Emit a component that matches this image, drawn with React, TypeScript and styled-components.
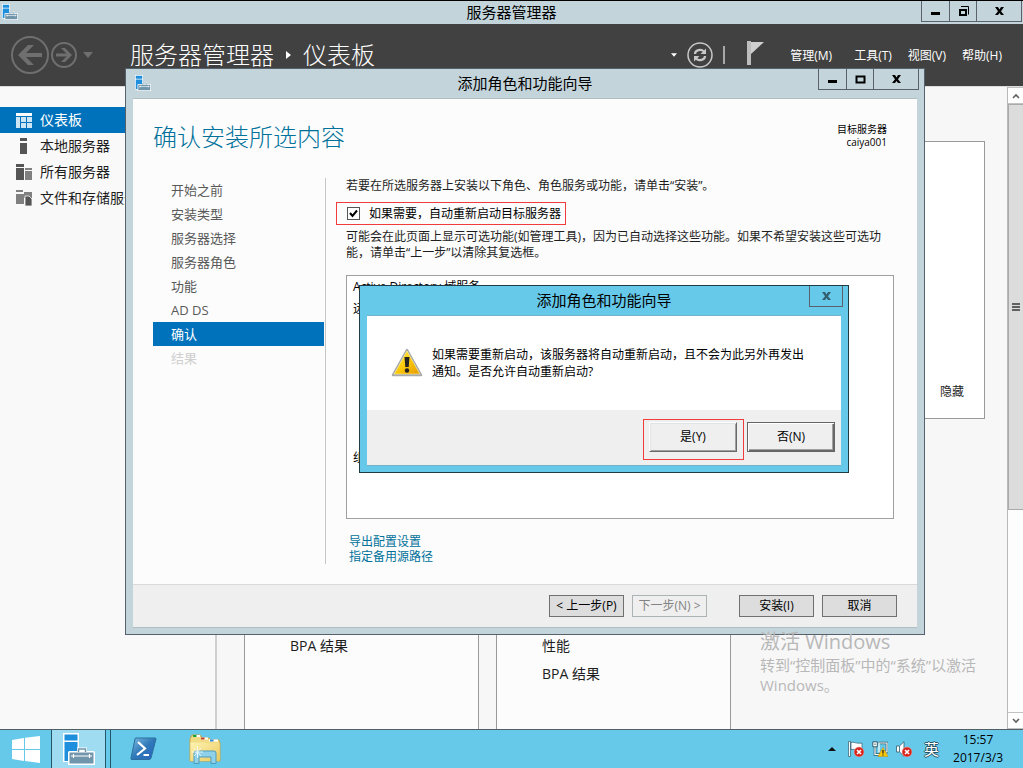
import React from "react";
import styled, { createGlobalStyle, css } from "styled-components";

const GlobalStyle = createGlobalStyle`
  * { box-sizing: border-box; }
  html, body, #root { height: 100%; }
  body {
    margin: 0;
    overflow: hidden;
    color: #1e1e1e;
    font: 12px/16px "Open Sans", "Noto Sans CJK SC", sans-serif;
  }
  button, input { font: inherit; color: inherit; margin: 0; padding: 0; }
  h1, h2, p, ul, nav { margin: 0; padding: 0; font-weight: 400; }
  ul { list-style: none; }
  a { color: inherit; text-decoration: none; }
  svg { display: block; flex: none; }
`;

const Desktop = styled.div`
  position: relative;
  display: flex;
  flex-direction: column;
  height: 100vh;
  overflow: hidden;
`;

/* ---------- window title bars ---------- */

const TitleBar = styled.header<{ $tall?: boolean }>`
  display: grid;
  grid-template-columns: 1fr auto 1fr;
  align-items: start;
  height: ${(p) => (p.$tall ? 29 : 23)}px;
`;

const TitleText = styled.h2<{ $tall?: boolean }>`
  grid-column: 2;
  font-size: 15px;
  line-height: ${(p) => (p.$tall ? 28 : 22)}px;
  color: #000;
`;

const TitleIcon = styled.span<{ $tall?: boolean }>`
  padding: ${(p) => (p.$tall ? "6px 0 0 9px" : "3px 0 0 2px")};
`;

const Controls = styled.div<{ $framed?: boolean }>`
  display: flex;
  grid-column: 3;
  justify-self: end;
  margin-right: ${(p) => (p.$framed ? 5 : 1)}px;
  border: 1px solid #5a606c;
  border-top: 0;
`;

const Control = styled.button<{ $width?: number; $muted?: boolean }>`
  display: flex;
  align-items: center;
  justify-content: center;
  width: ${(p) => p.$width ?? 27}px;
  height: 20px;
  border: 0;
  background: none;
  color: ${(p) => (p.$muted ? "#33606f" : "#000")};
  & + & { border-left: 1px solid #5a606c; }
`;

/* ---------- main window ---------- */

const MainWindow = styled.main`
  display: flex;
  flex: 1;
  flex-direction: column;
  min-height: 0;
  background: #c3d5db;
  border-top: 1px solid #000;
`;

const Banner = styled.div`
  display: flex;
  align-items: center;
  flex: none;
  height: 62px;
  padding: 0 21px 0 10px;
  background: #414141;
  color: #fff;
`;

const NavButtons = styled.div`
  display: flex;
  align-items: center;
  gap: 1px;
  width: 120px;
`;

const GlyphButton = styled.button`
  display: flex;
  border: 0;
  background: none;
`;

const HistoryButton = styled(GlyphButton)`
  margin-left: 5px;
`;

const Breadcrumb = styled.h1`
  display: flex;
  align-items: center;
  gap: 12px;
  flex: 1;
  font-size: 24px;
  font-weight: 300;
  line-height: 32px;
`;

const Tools = styled.div`
  display: flex;
  align-items: center;
  gap: 10px;
  margin-right: 25px;
`;

const FlagButton = styled(GlyphButton)`
  margin: 0 0 4px 12px;
`;

const Menu = styled.nav`
  display: flex;
  gap: 16px;
  padding-top: 2px;
`;

const MenuItem = styled.button`
  border: 0;
  background: none;
  white-space: nowrap;
  &:first-child { margin-right: 6px; }
`;

const Body = styled.div`
  display: flex;
  flex: 1;
  min-height: 0;
  border-top: 1px solid #dcdcdc;
  background: #f7f7f7;
`;

const Sidebar = styled.nav`
  flex: none;
  width: 217px;
  padding-top: 20px;
  border-right: 2px solid #cfcfcf;
  background: #f9f9f9;
`;

const SideLink = styled.a<{ $active?: boolean }>`
  display: flex;
  align-items: center;
  gap: 8px;
  height: 26px;
  padding-left: 16px;
  font-size: 14px;
  line-height: 20px;
  white-space: nowrap;
  ${(p) => p.$active && css`background: #0072bc; color: #fff;`}
`;

const Dashboard = styled.section`
  flex: 1;
  min-width: 0;
  padding: 54px 22px 0 27px;
  overflow: hidden;
`;

const WelcomeTile = styled.div`
  display: flex;
  align-items: flex-end;
  justify-content: flex-end;
  height: 278px;
  padding: 18px 20px;
  border: 1px solid #999;
  background: #fff;
`;

const HideLink = styled.button`
  border: 0;
  background: none;
`;

const RoleTiles = styled.div`
  display: flex;
  gap: 17px;
  height: 400px;
  margin-top: 20px;
`;

const RoleTile = styled.ul`
  width: 235px;
  padding: 192px 45px 0;
  border: 1px solid #999;
  background: #fcfcfc;
  font-size: 14px;
  line-height: 28px;
`;

const ScrollBar = styled.div`
  display: flex;
  flex-direction: column;
  flex: none;
  width: 16px;
  border-left: 1px solid #b9b9b9;
  background: #fdfdfd;
`;

const ScrollButton = styled.button`
  display: flex;
  align-items: center;
  justify-content: center;
  height: 17px;
  border: 1px solid #c2c2c2;
  border-width: 1px 0;
  background: #fff;
`;

const Thumb = styled.div`
  display: flex;
  align-items: center;
  justify-content: center;
  flex: 0 1 406px;
  border: 1px solid #aaa;
  border-right: 0;
  background: #dcdcdc;
`;

const Track = styled.div`
  flex: 1 0 0;
`;

/* ---------- wizard ---------- */

const Wizard = styled.section`
  position: absolute;
  top: 68px;
  left: 125px;
  right: 98px;
  padding-bottom: 6px;
  border: 1px solid #55616d;
  background: #c3d5db;
`;

const WizardPage = styled.div`
  margin: 0 7px;
  border: 1px solid #b0bdc2;
  border-width: 1px 0;
  background: #fcfcfc;
`;

const WizardHead = styled.div`
  display: flex;
  justify-content: space-between;
  height: 79px;
  padding: 20px 30px 0 20px;
`;

const WizardTitle = styled.h1`
  color: #00719a;
  font-size: 24px;
  font-weight: 300;
  line-height: 36px;
`;

const Target = styled.p`
  padding-top: 4px;
  color: #000;
  font-size: 10px;
  line-height: 13px;
  text-align: right;
`;

const WizardMain = styled.div`
  display: flex;
  padding: 0 23px 20px 20px;
`;

const Steps = styled.nav`
  flex: none;
  width: 173px;
  border-right: 1px solid #c6c6c6;
  padding-right: 1px;
`;

const Step = styled.a<{ $state?: "current" | "disabled" }>`
  display: block;
  padding-left: 18px;
  color: #595959;
  font-size: 13px;
  line-height: 24px;
  ${(p) => p.$state === "current" && css`background: #0072bc; color: #fff;`}
  ${(p) => p.$state === "disabled" && css`color: #cfcfcf;`}
`;

const StepContent = styled.div`
  display: flex;
  flex: 1;
  flex-direction: column;
  align-items: flex-start;
  min-width: 0;
  padding-left: 10px;
`;

const Copy = styled.p`
  padding: 0 10px;
`;

const RestartOption = styled.label`
  display: flex;
  align-items: center;
  gap: 9px;
  height: 23px;
  margin: 8px 0 4px;
  padding: 0 4px 0 10px;
  border: 1px solid #f03c3c;
  color: #000;
`;

const Checkbox = styled.input`
  appearance: none;
  width: 13px;
  height: 13px;
  border: 1px solid #555;
  background: #fff;
  &:checked {
    background: #fff url("data:image/svg+xml,%3Csvg xmlns='http://www.w3.org/2000/svg' viewBox='0 0 11 11'%3E%3Cpath d='M2 5l2.500 3L9 2.500' fill='none' stroke='%23000' stroke-width='2'/%3E%3C/svg%3E");
  }
`;

const Summary = styled.div`
  align-self: stretch;
  height: 244px;
  margin: 14px 0 15px 10px;
  padding: 0 6px;
  border: 1px solid #a0a0a0;
  background: #fff;
  color: #000;
  line-height: 22px;
`;

const SummaryGroup = styled.div<{ $last?: boolean }>`
  height: ${(p) => (p.$last ? 22 : 171)}px;
`;

const ActionLink = styled.a`
  padding-left: 13px;
  color: #00719a;
  line-height: 15px;
`;

const WizardFooter = styled.footer`
  display: flex;
  justify-content: flex-end;
  gap: 8px;
  padding: 10px 20px;
  border-top: 1px solid #d9d9d9;
  background: #efefef;
`;

const FlatButton = styled.button<{ $apart?: boolean }>`
  width: 75px;
  height: 22px;
  margin-left: ${(p) => (p.$apart ? 24 : 0)}px;
  border: 1px solid #707070;
  background: #dddddd;
  color: #000;
  line-height: 20px;
  white-space: nowrap;
  &:disabled { border-color: #adb2b5; background: #efefef; color: #838383; }
`;

/* ---------- confirmation dialog ---------- */

const Dialog = styled.section`
  position: absolute;
  top: 285px;
  left: 359px;
  width: 490px;
  padding-bottom: 6px;
  border: 1px solid #1f3b47;
  background: #66c9ea;
`;

const DialogPage = styled.div`
  margin: 0 7px;
  border: 1px solid #74b2c9;
  border-width: 1px 0;
`;

const Message = styled.div`
  display: flex;
  gap: 9px;
  height: 94px;
  padding: 30px 34px 0 24px;
  background: #fff;
  color: #000;
  line-height: 17px;
`;

const DialogActions = styled.div`
  display: flex;
  justify-content: flex-end;
  align-items: flex-start;
  gap: 3px;
  padding: 9px 6px 5px;
  background: #efefef;
`;

const Marked = styled.div`
  padding: 2px 6px 7px 5px;
  border: 1px solid #f03c3c;
`;

const RaisedButton = styled.button<{ $default?: boolean }>`
  display: block;
  width: 88px;
  height: 30px;
  border: 1px solid;
  border-color: #fff #696969 #696969 #fff;
  background: #efefef;
  box-shadow: inset 1px 1px #e3e3e3, inset -1px -1px #a0a0a0;
  color: #000;
  ${(p) =>
    p.$default &&
    css`
      margin-top: 3px;
      border-color: #646464;
      box-shadow: inset 1px 1px #fff, inset -1px -1px #696969, inset -2px -2px #a0a0a0;
    `}
`;

/* ---------- watermark and taskbar ---------- */

const Watermark = styled.aside`
  position: absolute;
  right: 34px;
  bottom: 73px;
  width: 229px;
  color: #b8b8b8;
  font-size: 15px;
  line-height: 20px;
  pointer-events: none;
  white-space: nowrap;
`;

const WatermarkTitle = styled.p`
  font-size: 20px;
  line-height: 26px;
`;

const Taskbar = styled.footer`
  display: flex;
  align-items: stretch;
  flex: none;
  height: 39px;
  border-top: 1px solid #4f5f66;
  background: #66c9ea;
  color: #000;
`;

const TaskButton = styled.button<{ $active?: boolean; $width: number }>`
  display: flex;
  align-items: center;
  justify-content: center;
  width: ${(p) => p.$width}px;
  border: 0;
  background: none;
  ${(p) =>
    p.$active &&
    css`
      background: #9fdcf2;
      border: 1px solid #24566a;
      border-width: 0 1px;
      box-shadow: 4px 0 #66c9ea, 5px 0 #24566a;
    `}
`;

const Tray = styled.div`
  display: flex;
  align-items: center;
  gap: 8px;
  margin-left: auto;
  padding-right: 20px;
`;

const TrayButton = styled.button`
  display: flex;
  border: 0;
  background: none;
  &:first-child { margin-right: 4px; }
`;

const InputMode = styled.button`
  margin-left: 4px;
  border: 0;
  background: none;
  color: #fff;
  font-size: 15px;
  line-height: 20px;
  text-shadow: 1px 0 #2b5564, -1px 0 #2b5564, 0 1px #2b5564, 0 -1px #2b5564;
`;

const Clock = styled.time`
  margin-left: 6px;
  font-size: 12px;
  line-height: 18px;
  text-align: center;
`;

/* ---------- drawings ---------- */

const ServerIcon = ({ size = 16 }: { size?: number }) => (
  <svg width={size} height={size} viewBox="0 0 32 32">
    <path d="M0 0h16v29H0z" fill="#fff" />
    <path d="M1.500 1.500h13v6h-13zM1.500 9h13v19h-13z" fill="#1e8fdd" />
    <path d="M14 18v-3.500h10V18h6.500q1.500 0 1.500 1.500V32H5V19.500Q5 18 6.500 18z" fill="#fff" />
    <path d="M6.500 19.500h24v11h-24z" fill="#7195ab" />
    <path d="M15.500 19v-3h7v3" fill="none" stroke="#7195ab" strokeWidth="1.500" />
    <path d="M8 23h21M10.500 21v4M26.500 21v4" stroke="#fff" strokeWidth="1.200" />
  </svg>
);

const MinimizeGlyph = () => (
  <svg width="11" height="11" viewBox="0 0 11 11"><path d="M1 6h9v3H1z" fill="currentColor" /></svg>
);

const MaximizeGlyph = () => (
  <svg width="11" height="11" viewBox="0 0 11 11"><path d="M1.500 2.500h8v6h-8z" fill="none" stroke="currentColor" strokeWidth="2" /></svg>
);

const RestoreGlyph = () => (
  <svg width="11" height="11" viewBox="0 0 11 11" fill="none" stroke="currentColor">
    <path d="M3 .5h7.500v8" />
    <path d="M2 4h6v5H2z" strokeWidth="2" />
  </svg>
);

const CloseGlyph = () => (
  <svg width="11" height="11" viewBox="0 0 11 11">
    <path d="M1 1h3l1.500 2.500L7 1h3L7 5.200 10 9H7L5.500 6.900 4 9H1l3-3.800z" fill="currentColor" />
  </svg>
);

const BackIcon = () => (
  <svg width="40" height="40" viewBox="0 0 40 40" fill="none" stroke="#6f6f6f">
    <circle cx="20" cy="20" r="18" strokeWidth="2" />
    <path d="M32 20H11" strokeWidth="4" />
    <path d="M8 20l10-10h6L14 20l10 10h-6z" fill="#6f6f6f" stroke="none" />
  </svg>
);

const ForwardIcon = () => (
  <svg width="26" height="26" viewBox="0 0 26 26" fill="none" stroke="#6f6f6f">
    <circle cx="13" cy="13" r="12" strokeWidth="2" />
    <path d="M5 13h14" strokeWidth="3" />
    <path d="M21 13l-7-7h-4l7 7-7 7h4z" fill="#6f6f6f" stroke="none" />
  </svg>
);

const Caret = ({ width = 6, color = "#fff" }: { width?: number; color?: string }) => (
  <svg width={width} height={width / 2 + 1} viewBox="0 0 10 6"><path d="M0 0h10L5 6z" fill={color} /></svg>
);

const RefreshIcon = () => (
  <svg width="26" height="26" viewBox="0 0 26 26" fill="none" stroke="#c8c8c8">
    <circle cx="13" cy="13" r="12" strokeWidth="1.500" />
    <path d="M8 12c0-4 6-5.500 9-2.500M18 14c0 4-6 5.500-9 2.500" strokeWidth="2.200" />
    <path d="M19 6.500v5.500h-5.500zM7 19.500V14h5.500z" fill="#c8c8c8" stroke="none" />
  </svg>
);

const FlagIcon = () => (
  <svg width="18" height="24" viewBox="0 0 18 24">
    <path d="M0 0h4v24H0z" fill="#bdbdbd" />
    <path d="M4 1h13L4 13z" fill="#d0d0d0" />
  </svg>
);

const DashboardIcon = () => (
  <svg width="16" height="16" viewBox="0 0 16 16">
    <path d="M0 1h16v3H0z" fill="#fff" />
    <path d="M0 5h4v11H0zM5 5h5v5H5zM11 5h5v5h-5zM5 11h5v5H5zM11 11h5v5h-5z" fill="#cde5f5" />
  </svg>
);

const LocalServerIcon = () => (
  <svg width="16" height="16" viewBox="0 0 16 16"><path d="M4 0h7v3H4zM4 5h7v11H4z" fill="#555" /></svg>
);

const AllServersIcon = () => (
  <svg width="16" height="16" viewBox="0 0 16 16">
    <path d="M0 0h8v3H0zM0 4h8v12H0z" fill="#555" />
    <path d="M9 4h7v2H9zM9 7h7v9H9z" fill="#808080" />
  </svg>
);

const StorageIcon = () => (
  <svg width="16" height="16" viewBox="0 0 16 16">
    <path d="M0 0h7v2H0zM0 4h8v10H0zM8 2h8v6H8z" fill="#808080" />
    <path d="M9 6h4l3 3v7H9z" fill="#555" stroke="#f9f9f9" strokeWidth=".8" />
  </svg>
);

const ChevronIcon = ({ down }: { down?: boolean }) => (
  <svg width="8" height="6" viewBox="0 0 8 6">
    <path d={down ? "M1 1l3 3 3-3" : "M1 5l3-3 3 3"} fill="none" stroke="#606060" strokeWidth="1.600" />
  </svg>
);

const GripIcon = () => (
  <svg width="8" height="8" viewBox="0 0 8 8"><path d="M0 0h8v2H0zM0 3h8v2H0zM0 6h8v2H0z" fill="#606060" /></svg>
);

const WarningIcon = () => (
  <svg width="32" height="32" viewBox="0 0 32 32">
    <defs>
      <linearGradient id="amber" x1="0" y1="0" x2="1" y2="1">
        <stop offset="0" stopColor="#fff04a" />
        <stop offset=".5" stopColor="#fbc90b" />
        <stop offset="1" stopColor="#e69a00" />
      </linearGradient>
    </defs>
    <path d="M16 4L30 29H2z" fill="#aaa" stroke="#aaa" strokeWidth="2.500" strokeLinejoin="round" />
    <path d="M16 5L28.800 28H3.200z" fill="url(#amber)" stroke="#fff3a0" strokeWidth=".6" />
    <path d="M13.500 11h5l-.8 10h-3.400z" fill="#222" />
    <circle cx="16" cy="24.500" r="2.200" fill="#222" />
  </svg>
);

const StartIcon = () => (
  <svg width="28" height="27" viewBox="0 0 28 27" fill="#fff">
    <path d="M0 4l12-2v11H0zM13 1.800L28 0v13H13zM0 14h12v11L0 23zM13 14h15v13l-15-2z" />
  </svg>
);

const PowerShellIcon = () => (
  <svg width="28" height="24" viewBox="0 0 28 24">
    <defs>
      <linearGradient id="shell" x1="0" y1="0" x2="1" y2="1">
        <stop offset="0" stopColor="#7fbde3" />
        <stop offset=".5" stopColor="#2f78b8" />
        <stop offset="1" stopColor="#2a62c0" />
      </linearGradient>
    </defs>
    <path d="M7 1h19q1 0 1 1l-5 19q-.5 1.500-2 1.500H3q-1.500 0-1-1.500L6 2q0-1 1-1z" fill="url(#shell)" stroke="#2a6f9e" />
    <path d="M9 5l7 6.500-8 6.500M14.500 18h5.500" fill="none" stroke="#fff" strokeWidth="2.200" />
  </svg>
);

const FolderIcon = () => (
  <svg width="32" height="30" viewBox="0 0 32 30">
    <defs>
      <linearGradient id="folder" x1="0" y1="0" x2="1" y2="1">
        <stop offset="0" stopColor="#fdf3b4" />
        <stop offset="1" stopColor="#ecc95c" />
      </linearGradient>
    </defs>
    <path d="M1 27V5l2-4h8l2 3h7l2 2h8l1 3v18z" fill="#f2dc84" stroke="#c9a646" />
    <path d="M4 1h7v2H4zM12 3.500h7v2h-7zM20 5.500h9v2h-9z" fill="#fff" />
    <path d="M4 1h3.500v2H4z" fill="#18a33a" />
    <path d="M12 3.500h3.500v2H12z" fill="#c8402c" />
    <path d="M21 5.500h3.500v2H21z" fill="#2c8ae0" />
    <path d="M1.500 8.500h14l2 1h13V27h-29z" fill="url(#folder)" />
    <path d="M5 29.500V19q0-2 2-2h18q2 0 2 2v10.500h-5V23H10v6.500z" fill="#8fd0ea" stroke="#4a9dbf" />
    <path d="M8.500 12v12M3 18h11M5 14l7 8M12 14l-7 8" stroke="#fff" strokeWidth=".9" opacity=".85" />
  </svg>
);

const ErrorBadge = () => (
  <>
    <circle cx="11" cy="11" r="5" fill="#d9261c" stroke="#f5b5b0" strokeWidth=".5" />
    <path d="M9 9l4 4M13 9l-4 4" stroke="#fff" strokeWidth="1.600" />
  </>
);

const ActionCenterIcon = () => (
  <svg width="16" height="16" viewBox="0 0 16 16">
    <path d="M.5.500h2v15h-2z" fill="#fff" stroke="#2f5c6b" strokeWidth=".7" />
    <path d="M3 1.500c3-1 5 1.500 11 .5v7c-5 1-7-1.500-11-.5z" fill="#fff" stroke="#2f5c6b" strokeWidth=".7" />
    <ErrorBadge />
  </svg>
);

const NetworkIcon = () => (
  <svg width="16" height="16" viewBox="0 0 16 16">
    <path d="M6.500 2h8.500v9H7M3 6v7.500h5" fill="none" stroke="#2f5c6b" strokeWidth="2.600" />
    <path d="M6.500 2h8.500v9H7V2M3 6v7.500h5" fill="none" stroke="#fff" strokeWidth="1.200" />
    <path d="M.8.800h4.500v5H.8z" fill="#fff" stroke="#2f5c6b" />
    <path d="M2.500 2.500h1v1.500h-1z" fill="#2f5c6b" />
    <path d="M11 6.500l5 9H6z" fill="#fbc90b" stroke="#c98d00" strokeWidth=".5" />
    <path d="M11 9v3.500M11 13.500v1" stroke="#222" strokeWidth="1.300" />
  </svg>
);

const VolumeIcon = () => (
  <svg width="16" height="16" viewBox="0 0 16 16">
    <path d="M.5 5h3L8 .7v14.600L3.500 11h-3z" fill="#fff" stroke="#2f5c6b" strokeWidth=".8" />
    <path d="M3.500 5v6" stroke="#2f5c6b" strokeWidth=".8" />
    <ErrorBadge />
  </svg>
);

/* ---------- page ---------- */

const sideItems = [
  { label: "仪表板", Icon: DashboardIcon, active: true },
  { label: "本地服务器", Icon: LocalServerIcon },
  { label: "所有服务器", Icon: AllServersIcon },
  { label: "文件和存储服务", Icon: StorageIcon },
];

const steps: { label: string; state?: "current" | "disabled" }[] = [
  { label: "开始之前" },
  { label: "安装类型" },
  { label: "服务器选择" },
  { label: "服务器角色" },
  { label: "功能" },
  { label: "AD DS" },
  { label: "确认", state: "current" },
  { label: "结果", state: "disabled" },
];

const WindowControls = ({ restored }: { restored?: boolean }) => (
  <Controls $framed={!restored}>
    <Control aria-label="最小化"><MinimizeGlyph /></Control>
    <Control aria-label="最大化">{restored ? <RestoreGlyph /> : <MaximizeGlyph />}</Control>
    <Control aria-label="关闭" $width={45}><CloseGlyph /></Control>
  </Controls>
);

const ServerManager = () => (
  <MainWindow>
    <TitleBar>
      <TitleIcon><ServerIcon /></TitleIcon>
      <TitleText>服务器管理器</TitleText>
      <WindowControls restored />
    </TitleBar>
    <Banner>
      <NavButtons>
        <GlyphButton aria-label="后退"><BackIcon /></GlyphButton>
        <GlyphButton aria-label="前进"><ForwardIcon /></GlyphButton>
        <HistoryButton aria-label="历史记录"><Caret width={10} color="#6f6f6f" /></HistoryButton>
      </NavButtons>
      <Breadcrumb>
        服务器管理器
        <svg width="5" height="8" viewBox="0 0 5 8"><path d="M0 0l5 4-5 4z" fill="#fff" /></svg>
        仪表板
      </Breadcrumb>
      <Tools>
        <GlyphButton aria-label="选项"><Caret /></GlyphButton>
        <GlyphButton aria-label="刷新"><RefreshIcon /></GlyphButton>
        <svg width="2" height="18"><path d="M0 0h2v18H0z" fill="#a8a8a8" /></svg>
        <FlagButton aria-label="通知"><FlagIcon /></FlagButton>
      </Tools>
      <Menu>
        {["管理(M)", "工具(T)", "视图(V)", "帮助(H)"].map((label) => (
          <MenuItem key={label}>{label}</MenuItem>
        ))}
      </Menu>
    </Banner>
    <Body>
      <Sidebar>
        {sideItems.map(({ label, Icon, active }) => (
          <SideLink key={label} href="#" $active={active}><Icon />{label}</SideLink>
        ))}
      </Sidebar>
      <Dashboard>
        <WelcomeTile><HideLink>隐藏</HideLink></WelcomeTile>
        <RoleTiles>
          <RoleTile><li>BPA 结果</li></RoleTile>
          <RoleTile><li>性能</li><li>BPA 结果</li></RoleTile>
        </RoleTiles>
      </Dashboard>
      <ScrollBar>
        <ScrollButton aria-label="向上滚动"><ChevronIcon /></ScrollButton>
        <Thumb><GripIcon /></Thumb>
        <Track />
        <ScrollButton aria-label="向下滚动"><ChevronIcon down /></ScrollButton>
      </ScrollBar>
    </Body>
  </MainWindow>
);

const RoleWizard = () => (
  <Wizard>
    <TitleBar $tall>
      <TitleIcon $tall><ServerIcon /></TitleIcon>
      <TitleText $tall>添加角色和功能向导</TitleText>
      <WindowControls />
    </TitleBar>
    <WizardPage>
      <WizardHead>
        <WizardTitle>确认安装所选内容</WizardTitle>
        <Target>目标服务器<br />caiya001</Target>
      </WizardHead>
      <WizardMain>
        <Steps>
          {steps.map(({ label, state }) => (
            <Step key={label} href="#" $state={state}>{label}</Step>
          ))}
        </Steps>
        <StepContent>
          <Copy>若要在所选服务器上安装以下角色、角色服务或功能，请单击“安装”。</Copy>
          <RestartOption>
            <Checkbox type="checkbox" defaultChecked />
            如果需要，自动重新启动目标服务器
          </RestartOption>
          <Copy>可能会在此页面上显示可选功能(如管理工具)，因为已自动选择这些功能。如果不希望安装这些可选功能，请单击“上一步”以清除其复选框。</Copy>
          <Summary>
            <SummaryGroup>Active Directory 域服务<br />远程服务器管理工具</SummaryGroup>
            <SummaryGroup $last>组策略管理</SummaryGroup>
          </Summary>
          <ActionLink href="#">导出配置设置</ActionLink>
          <ActionLink href="#">指定备用源路径</ActionLink>
        </StepContent>
      </WizardMain>
      <WizardFooter>
        <FlatButton>&lt; 上一步(P)</FlatButton>
        <FlatButton disabled>下一步(N) &gt;</FlatButton>
        <FlatButton $apart>安装(I)</FlatButton>
        <FlatButton>取消</FlatButton>
      </WizardFooter>
    </WizardPage>
  </Wizard>
);

const RestartDialog = () => (
  <Dialog role="dialog" aria-label="添加角色和功能向导">
    <TitleBar $tall>
      <TitleText $tall>添加角色和功能向导</TitleText>
      <Controls $framed><Control aria-label="关闭" $muted $width={32}><CloseGlyph /></Control></Controls>
    </TitleBar>
    <DialogPage>
      <Message>
        <WarningIcon />
        <p>如果需要重新启动，该服务器将自动重新启动，且不会为此另外再发出通知。是否允许自动重新启动?</p>
      </Message>
      <DialogActions>
        <Marked><RaisedButton>是(Y)</RaisedButton></Marked>
        <RaisedButton $default>否(N)</RaisedButton>
      </DialogActions>
    </DialogPage>
  </Dialog>
);

export default function App() {
  return (
    <Desktop>
      <GlobalStyle />
      <ServerManager />
      <RoleWizard />
      <RestartDialog />
      <Watermark>
        <WatermarkTitle>激活 Windows</WatermarkTitle>
        <p>转到“控制面板”中的“系统”以激活</p>
        <p>Windows。</p>
      </Watermark>
      <Taskbar>
        <TaskButton $width={51} aria-label="开始"><StartIcon /></TaskButton>
        <TaskButton $width={55} $active aria-label="服务器管理器"><ServerIcon size={32} /></TaskButton>
        <TaskButton $width={74} aria-label="PowerShell"><PowerShellIcon /></TaskButton>
        <TaskButton $width={50} aria-label="文件资源管理器"><FolderIcon /></TaskButton>
        <Tray>
          <TrayButton aria-label="显示隐藏的图标">
            <svg width="8" height="4" viewBox="0 0 8 4"><path d="M4 0l4 4H0z" fill="#111" /></svg>
          </TrayButton>
          <TrayButton aria-label="操作中心"><ActionCenterIcon /></TrayButton>
          <TrayButton aria-label="网络"><NetworkIcon /></TrayButton>
          <TrayButton aria-label="音量"><VolumeIcon /></TrayButton>
          <InputMode>英</InputMode>
          <Clock>15:57<br />2017/3/3</Clock>
        </Tray>
      </Taskbar>
    </Desktop>
  );
}
